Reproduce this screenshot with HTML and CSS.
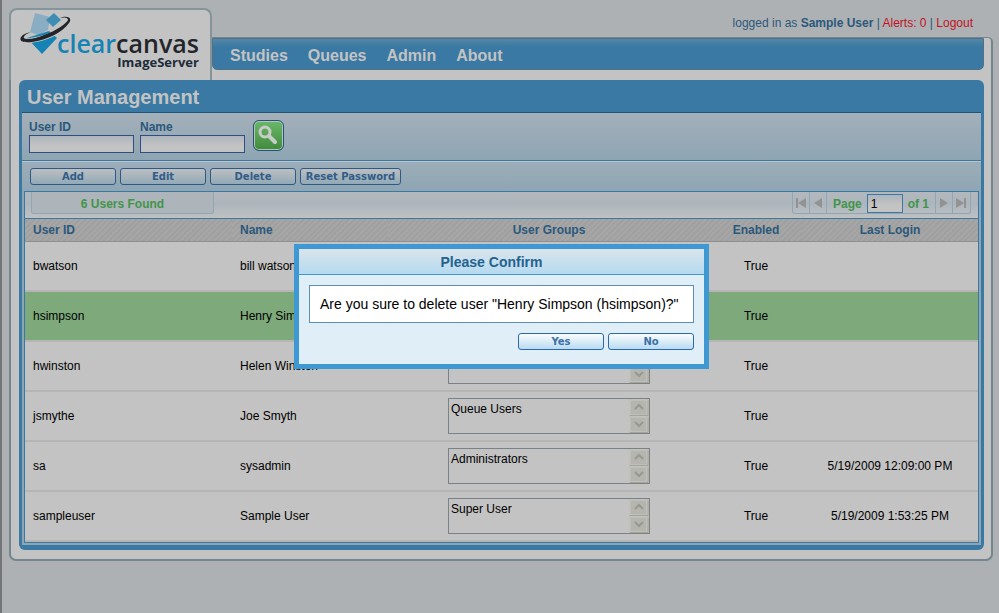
FILE: index.html
```html
<!DOCTYPE html>
<html lang="en">
<head>
<meta charset="utf-8">
<title>ClearCanvas ImageServer</title>
<link rel="stylesheet" href="styles.css">
</head>
<body>
<div class="page">
  <header class="header">
    <div class="logo">
      <svg class="logo-mark" viewBox="0 0 52 44" aria-hidden="true">
        <path d="M15 1 L30 5 L28 18 L18 23 L10 20 Z" fill="#8aadc4"/>
        <path d="M34 1 L41 8 L33 15 L26 8 Z" fill="#3d8db5"/>
        <path d="M7 26 L29 19 L37 26 L22 42 Z" fill="#1583b4"/>
        <path d="M1 26 C0 29 5 30 13 28 C28 26 46 17 49 9" fill="none" stroke="#c3c3c3" stroke-width="5"/>
        <path d="M40 6 C47 3 53 6 49 11 C43 20 27 28 12 30 C2 31 -1 29 1 25 C3 22 7 21 11 20 C6 22 3 24 4 26 C6 28 15 27 24 23 C36 19 47 11 48 8 C48 5 44 5 40 6 Z" fill="#222529"/>
      </svg>
      <div class="logo-text">
        <div class="logo-name">clear<span class="logo-dark">canvas</span></div>
        <div class="logo-product">ImageServer</div>
      </div>
    </div>
    <div class="header-main">
      <div class="session">logged in as <b>Sample User</b> | <a href="#">Alerts: 0</a> | <a href="#">Logout</a></div>
      <div class="nav-frame">
        <nav class="nav">
          <a href="#">Studies</a><a href="#">Queues</a><a href="#">Admin</a><a href="#">About</a>
        </nav>
      </div>
    </div>
  </header>
  <main class="frame">
    <section class="panel">
      <h1 class="panel-title">User Management</h1>
      <div class="panel-body">
        <form class="search">
          <div class="field"><label for="uid">User ID</label><input id="uid" type="text"></div>
          <div class="field"><label for="uname">Name</label><input id="uname" type="text"></div>
          <button class="search-button" type="button" aria-label="Search">
            <svg viewBox="0 0 29 29" aria-hidden="true">
              <circle cx="11" cy="11" r="5" fill="none" stroke="#c9cbc9" stroke-width="3"/>
              <path d="M15 15 L21 21" stroke="#c9cbc9" stroke-width="4" stroke-linecap="round"/>
            </svg>
          </button>
        </form>
        <div class="tools">
          <div class="toolbar">
            <button class="btn" type="button">Add</button>
            <button class="btn" type="button">Edit</button>
            <button class="btn" type="button">Delete</button>
            <button class="btn btn-wide" type="button">Reset Password</button>
          </div>
          <div class="grid">
            <div class="pager">
              <div class="count">6 Users Found</div>
              <div class="pages">
                <button type="button" aria-label="First page"><svg viewBox="0 0 12 12"><path d="M1 1h2v10h-2z M11 1v10l-8-5z"/></svg></button>
                <button type="button" aria-label="Previous page"><svg viewBox="0 0 12 12"><path d="M10 1v10l-8-5z"/></svg></button>
                <div class="page-number"><label for="pg">Page</label><input id="pg" type="text" value="1"><span>of 1</span></div>
                <button type="button" aria-label="Next page"><svg viewBox="0 0 12 12"><path d="M2 1v10l8-5z"/></svg></button>
                <button type="button" aria-label="Last page"><svg viewBox="0 0 12 12"><path d="M9 1h2v10h-2z M1 1v10l8-5z"/></svg></button>
              </div>
            </div>
            <table class="users">
              <colgroup><col class="c-id"><col class="c-name"><col class="c-groups"><col class="c-enabled"><col class="c-login"></colgroup>
              <thead><tr><th>User ID</th><th>Name</th><th class="mid">User Groups</th><th class="mid">Enabled</th><th class="mid">Last Login</th></tr></thead>
              <tbody>
                <tr><td>bwatson</td><td>bill watson</td><td class="mid"></td><td class="mid">True</td><td class="mid"></td></tr>
                <tr class="selected"><td>hsimpson</td><td>Henry Simpson</td><td class="mid"></td><td class="mid">True</td><td class="mid"></td></tr>
                <tr><td>hwinston</td><td>Helen Winston</td><td class="mid"><div class="list"><textarea aria-label="Groups" readonly></textarea><svg class="scroll" viewBox="0 0 20 34"><use href="#scroll"/></svg></div></td><td class="mid">True</td><td class="mid"></td></tr>
                <tr><td>jsmythe</td><td>Joe Smyth</td><td class="mid"><div class="list"><textarea aria-label="Groups" readonly>Queue Users</textarea><svg class="scroll" viewBox="0 0 20 34"><use href="#scroll"/></svg></div></td><td class="mid">True</td><td class="mid"></td></tr>
                <tr><td>sa</td><td>sysadmin</td><td class="mid"><div class="list"><textarea aria-label="Groups" readonly>Administrators</textarea><svg class="scroll" viewBox="0 0 20 34"><use href="#scroll"/></svg></div></td><td class="mid">True</td><td class="mid">5/19/2009 12:09:00 PM</td></tr>
                <tr><td>sampleuser</td><td>Sample User</td><td class="mid"><div class="list"><textarea aria-label="Groups" readonly>Super User</textarea><svg class="scroll" viewBox="0 0 20 34"><use href="#scroll"/></svg></div></td><td class="mid">True</td><td class="mid">5/19/2009 1:53:25 PM</td></tr>
              </tbody>
            </table>
          </div>
        </div>
      </div>
    </section>
  </main>
</div>
<svg class="sprites" aria-hidden="true">
  <symbol id="scroll" viewBox="0 0 20 34">
    <rect width="20" height="34" fill="#bcbcb7"/>
    <rect x="1" y="1" width="17" height="15" rx="1" fill="#b4b5ae" stroke="#c8c8be"/>
    <rect x="1" y="18" width="17" height="15" rx="1" fill="#b4b5ae" stroke="#c8c8be"/>
    <path d="M1 16.500h18v-15M1 33.500h18v-15" fill="none" stroke="#a4a49d"/>
    <path d="M6 10l4-4 4 4M6 23l4 4 4-4" fill="none" stroke="#979890" stroke-width="2"/>
  </symbol>
</svg>
<div class="overlay">
  <div class="dialog" role="dialog" aria-labelledby="dialog-title">
    <h2 class="dialog-title" id="dialog-title">Please Confirm</h2>
    <div class="dialog-body">
      <p class="message">Are you sure to delete user "Henry Simpson (hsimpson)?"</p>
      <div class="dialog-actions">
        <button class="btn btn-bright" type="button">Yes</button>
        <button class="btn btn-bright" type="button">No</button>
      </div>
    </div>
  </div>
</div>
</body>
</html>
```
FILE: styles.css
```css
* { box-sizing: border-box; }
html { min-height: 100%; background: #adb1b4; }
body {
  margin: 0;
  min-height: 100vh;
  border-left: 2px solid #737577;
  font: 12px/16px "Liberation Sans", Arial, sans-serif;
  color: #000;
}
a { text-decoration: none; }
button, input, textarea { font: inherit; margin: 0; padding: 0; }
.page { padding: 8px 6px 0 7px; }

.header { display: flex; }
.logo {
  display: flex;
  width: 203px;
  height: 72px;
  padding: 2px 0 0 9px;
  background: #c3c3c3;
  border: 2px solid #84949b;
  border-bottom: 0;
  border-radius: 8px 8px 0 0;
}
.logo-mark { flex: none; width: 52px; height: 44px; }
.logo-text { margin: 18px 0 0 -15px; font-family: "Open Sans", "Noto Sans", sans-serif; }
.logo-name { font-size: 25px; font-weight: 600; line-height: 26px; color: #1583b4; }
.logo-dark { color: #222529; }
.logo-product { font-size: 13px; font-weight: bold; line-height: 12px; text-align: right; color: #1d2c3b; }
.header-main { flex: 1; display: flex; flex-direction: column; }
.session { height: 29px; padding: 7px 20px 0 0; text-align: right; color: #2b587b; }
.session a { color: #c4111e; }
.nav-frame {
  flex: 1;
  padding-right: 7px;
  background: #c3c3c3;
  border: 2px solid #74868d;
  border-width: 1px 2px 0 0;
  border-radius: 0 5px 0 0;
}
.nav {
  display: flex;
  gap: 20px;
  height: 32px;
  padding: 0 17px;
  background: linear-gradient(#5487a8, #3a79a3 8px);
  border: 1px solid #527184;
  border-radius: 0 0 5px 5px;
  font-size: 16px;
  font-weight: bold;
  line-height: 34px;
}
.nav a { color: #c3c3c3; }

.frame {
  padding: 0 7px 9px 8px;
  background: #c3c3c3;
  border: 2px solid #74868d;
  border-top: 0;
  border-radius: 0 0 7px 7px;
}
.panel { padding: 0 3px 5px; background: #3a79a3; border-radius: 6px; }
.panel-title {
  margin: 0;
  padding: 0 5px;
  border-bottom: 1px solid #1d5478;
  font-size: 20px;
  line-height: 34px;
  height: 33px;
  color: #c3c3c3;
}
.panel-body { background: #8fa5b3; }
.search {
  display: flex;
  gap: 6px;
  height: 48px;
  padding: 6px 7px;
  background: linear-gradient(#a4b0ba, #8ea5b3);
  border-bottom: 1px solid #3a79a3;
}
.field { display: flex; flex-direction: column; }
.field label { font-weight: bold; color: #2b587b; }
.field input {
  width: 105px;
  height: 18px;
  background: linear-gradient(#adb5bd, #c3c3c3 10px);
  border: 1px solid #2f4f84;
}
.search-button {
  width: 31px;
  height: 31px;
  margin: 1px 2px;
  background: linear-gradient(#6cb86a, #3f8b3b);
  border: 1px solid #215577;
  border-radius: 6px;
  box-shadow: inset 0 0 0 1px #b9c3bd;
}
.search-button svg { display: block; width: 29px; height: 29px; }
.tools { padding: 6px 2px 2px; border-top: 1px solid #bcc3c8; background: linear-gradient(#9cadb8, #8ea5b3 30px); }
.toolbar { display: flex; gap: 4px; padding: 0 6px 6px; }
.btn {
  width: 86px;
  height: 17px;
  background: linear-gradient(#bdbfc1, #91a9b7);
  border: 1px solid #2c5a86;
  border-radius: 3px;
  font-family: "DejaVu Sans", Verdana, sans-serif;
  font-size: 10px;
  font-weight: bold;
  line-height: 14px;
  white-space: nowrap;
  color: #315d89;
}
.btn-wide { width: 101px; }

.grid { border: 1px solid #3a79a3; background: #c3c3c3; }
.pager {
  display: flex;
  justify-content: space-between;
  height: 26px;
  padding: 0 7px 4px 6px;
  background: linear-gradient(#b2b8bd, #adb5bc 12px, #bfc1c2);
}
.count {
  width: 183px;
  border: 1px solid #8fa7b5;
  border-top: 0;
  border-radius: 0 0 3px 3px;
  background: #adb5bb;
  font-weight: bold;
  line-height: 24px;
  text-align: center;
  color: #42944a;
}
.pages {
  display: flex;
  border: 1px solid #8fa7b5;
  border-top: 0;
  border-radius: 0 0 3px 3px;
}
.pages button { width: 17px; padding: 2px; background: none; border: 0; border-right: 1px solid #8fa7b5; }
.pages button:last-child { border-right: 0; }
.pages svg { display: block; width: 12px; height: 12px; fill: #929292; }
.page-number {
  display: flex;
  align-items: center;
  gap: 5px;
  padding: 2px 6px 0;
  border-right: 1px solid #8fa7b5;
  font-weight: bold;
  color: #42944a;
}
.page-number input {
  width: 36px;
  height: 19px;
  padding: 0 3px;
  background: linear-gradient(#adb5bd, #c3c3c3 10px);
  border: 1px solid #3a79a3;
  font-weight: normal;
}

.users { width: 100%; table-layout: fixed; border-collapse: separate; border-spacing: 0; }
.c-id { width: 207px; }
.c-name { width: 156px; }
.c-groups { width: 322px; }
.c-enabled { width: 92px; }
.c-login { width: 176px; }
.users th {
  height: 24px;
  padding: 0 8px;
  border-top: 1px solid #3a79a3;
  border-bottom: 1px solid #8f8f8f;
  background: repeating-linear-gradient(135deg, #a6a6a6 0 2px, #a0a0a0 2px 4px);
  text-align: left;
  color: #2b587b;
}
.users td { height: 50px; padding: 0 8px; border-bottom: 2px solid #b5b5b5; white-space: nowrap; }
.users .mid { padding: 0; text-align: center; }
.users .selected td { background: #7da97b; }
.list {
  display: flex;
  width: 202px;
  height: 36px;
  margin: 0 auto;
  border: 1px solid #7b8287;
}
.list textarea {
  flex: 1;
  min-width: 0;
  padding: 2px;
  background: none;
  border: 0;
  overflow: hidden;
  resize: none;
  color: #000;
}
.scroll { flex: none; width: 20px; height: 34px; }
.sprites { display: none; }

.overlay {
  position: fixed;
  inset: 0;
  display: flex;
  align-items: center;
  justify-content: center;
  padding-left: 4px;
}
.dialog { width: 415px; background: #e0eef8; border: 5px solid #3d98d3; }
.dialog-title {
  margin: 0;
  height: 26px;
  background: linear-gradient(#dae4ec, #b5daf0);
  border-bottom: 1px solid #3d98d3;
  font-size: 14px;
  line-height: 27px;
  padding-right: 20px;
  text-align: center;
  color: #23628f;
}
.dialog-body { padding: 10px 10px 14px; }
.message {
  margin: 0;
  padding: 0 10px;
  background: #fff;
  border: 1px solid #5b8fb3;
  font-size: 14px;
  line-height: 36px;
  white-space: nowrap;
}
.dialog-actions { display: flex; justify-content: flex-end; gap: 4px; padding-top: 10px; }
.btn-bright { background: linear-gradient(#fbfdfe, #b9dbf0); border-color: #2c69a8; color: #3c71a8; }
```
